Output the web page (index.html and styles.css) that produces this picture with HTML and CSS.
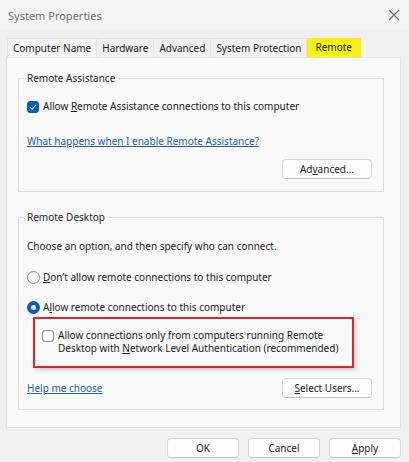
FILE: index.html
```html
<!DOCTYPE html>
<html lang="en">
<head>
<meta charset="UTF-8">
<meta name="viewport" content="width=device-width, initial-scale=1.0">
<title>System Properties</title>
<link rel="stylesheet" href="styles.css">
</head>
<body>

<div class="window">
    <div class="titlebar">
        <span class="title">System Properties</span>
        <svg class="close" width="12" height="12" viewBox="0 0 12 12">
            <path d="M1 1 L11 11 M11 1 L1 11" stroke="#6a6a6a" stroke-width="1.1" fill="none"/>
        </svg>
    </div>

    <div class="tabs">
        <span class="tab">Computer Name</span>
        <span class="tab">Hardware</span>
        <span class="tab">Advanced</span>
        <span class="tab">System Protection</span>
        <span class="tab active">Remote</span>
    </div>

    <div class="panel">
        <fieldset class="group">
            <legend>Remote Assistance</legend>
            <label class="check">
                <span class="box checked">
                    <svg width="8" height="8" viewBox="0 0 8 8"><path d="M1 4.2 L3.1 6.2 L7 1.8" stroke="#fff" stroke-width="1.1" fill="none"/></svg>
                </span>
                <span>Allow <u>R</u>emote Assistance connections to this computer</span>
            </label>
            <a class="link link-assist" href="#">What happens when I enable Remote Assistance?</a>
            <div class="row row-end">
                <button class="btn">Ad<u>v</u>anced...</button>
            </div>
        </fieldset>

        <fieldset class="group group-desktop">
            <legend>Remote Desktop</legend>
            <p class="intro">Choose an option, and then specify who can connect.</p>
            <label class="radio radio-first">
                <span class="dot"></span>
                <span><u>D</u>on’t allow remote connections to this computer</span>
            </label>
            <label class="radio">
                <span class="dot on"></span>
                <span>A<u>l</u>low remote connections to this computer</span>
            </label>
            <div class="highlight">
                <label class="check check-nla">
                    <span class="box"></span>
                    <span>Allow connections only from computers running Remote<br>Desktop with <u>N</u>etwork Level Authentication (recommended)</span>
                </label>
            </div>
            <div class="row row-between">
                <a class="link" href="#">Help me choose</a>
                <button class="btn"><u>S</u>elect Users...</button>
            </div>
        </fieldset>
    </div>

    <div class="footer">
        <button class="btn">OK</button>
        <button class="btn">Cancel</button>
        <button class="btn"><u>A</u>pply</button>
    </div>
</div>

</body>
</html>
```
FILE: styles.css
```css
body {
    margin: 0;
    background-color: #f0f0f0;
    font-family: "Noto Sans", "Open Sans", sans-serif;
    font-size: 10px;
    color: #1b1b1b;
}
.window {
    width: 409px;
    height: 462px;
    display: flex;
    flex-direction: column;
}
.titlebar {
    height: 30px;
    background-color: #f3f3f3;
    display: flex;
    align-items: center;
    justify-content: space-between;
    padding: 0 9px 0 8px;
}
.title {
    font-size: 11px;
    color: #6f6f6f;
}
.close {
    display: block;
}

/* tabs */
.tabs {
    display: flex;
    margin: 8px 0 0 7px;
    height: 19px;
}
.tab {
    display: flex;
    align-items: center;
    padding: 0 5px;
    border: 1px solid #e3e3e3;
    border-bottom: none;
    border-left: none;
    background-color: #f0f0f0;
}
.tab:first-child {
    border-left: 1px solid #e3e3e3;
    background-color: #f6f6f6;
}
.tab.active {
    background-color: #f7f20c;
    border-color: #f7f20c;
    padding: 0 8px 2px;
}

/* panel */
.panel {
    margin: 0 8px 0 6px;
    height: 371px;
    box-sizing: border-box;
    background-color: #f9f9f9;
    border: 1px solid #e2e2e2;
    padding: 13px 16px 0 11px;
}
.group {
    margin: 0;
    border: 1px solid #dcdcdc;
    padding: 13px 11px 12px 8px;
    display: flex;
    flex-direction: column;
    align-items: flex-start;
}
.group legend {
    padding: 0 3px;
    margin-left: -3px;
    line-height: 15px;
}
.group-desktop {
    margin-top: 18px;
    padding-top: 14px;
    padding-bottom: 11px;
}

.check,
.radio {
    display: flex;
    align-items: center;
    gap: 4px;
    line-height: 15px;
}
.box {
    width: 12px;
    height: 12px;
    box-sizing: border-box;
    border: 1px solid #8b8b8b;
    border-radius: 3px;
    background-color: #fbfbfb;
    display: flex;
    align-items: center;
    justify-content: center;
    flex-shrink: 0;
}
.box.checked {
    background-color: #005fb8;
    border-color: #005fb8;
}
.box svg {
    display: block;
}

.dot {
    width: 13px;
    height: 13px;
    box-sizing: border-box;
    border: 1px solid #8a8a8a;
    border-radius: 50%;
    background-color: #fbfbfb;
    flex-shrink: 0;
    margin-right: -1px;
}
.dot.on {
    border: 4px solid #005fb8;
    background-color: #fff;
}

.link {
    color: #1a62ad;
    line-height: 15px;
}
.link-assist {
    margin-top: 20px;
}

.row {
    align-self: stretch;
    display: flex;
    align-items: center;
}
.row-end {
    justify-content: flex-end;
    margin-top: 10px;
}
.row-between {
    justify-content: space-between;
    margin-top: 10px;
}

.btn {
    width: 90px;
    height: 20px;
    padding: 0;
    font-family: inherit;
    font-size: 10px;
    color: #1b1b1b;
    background-color: #fdfdfd;
    border: 1px solid #d4d4d4;
    border-bottom-color: #c4c4c4;
    border-radius: 4px;
}

.intro {
    margin: 0;
    line-height: 15px;
}
.radio-first {
    margin-top: 16px;
}
.radio + .radio {
    margin-top: 15px;
}

.highlight {
    margin: 2px 0 0 6px;
    width: 321px;
    box-sizing: border-box;
    border: 2px solid #d42a2a;
    padding: 10px 7px 11px;
    box-shadow: 2px 2px 4px rgba(0, 0, 0, 0.18);
}
.check-nla {
    align-items: flex-start;
    line-height: 13px;
}
.check-nla .box {
    margin-top: 1px;
}

/* dialog buttons */
.footer {
    display: flex;
    justify-content: flex-end;
    gap: 9px;
    margin-top: 10px;
    padding-right: 8px;
}
.footer .btn {
    width: 72px;
}
```
